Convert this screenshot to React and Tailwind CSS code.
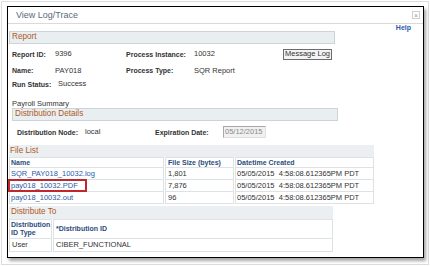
export default function App() {
  const lbl = "text-[7px] font-bold text-[#333] leading-none whitespace-nowrap";
  const val = "text-[7.5px] text-[#333] leading-none whitespace-nowrap";
  const th = "text-[7px] font-bold text-[#2c4d7c] leading-[8px]";
  const cell = "border-x border-b border-[#dde2e4] bg-white flex items-center";
  const link = "text-[7.5px] text-[#2a5aa8] leading-none whitespace-nowrap";
  return (
    <div className="w-[430px] h-[266px] bg-white p-[1px] font-['Liberation_Sans',Arial,sans-serif]">
      <div className="h-full border border-[#dcdcdc] pl-[5px] pt-[4px]">
        <div className="w-[417px] h-[252px] border border-black bg-white shadow-[2px_3px_3px_rgba(0,0,0,0.35)] flex flex-col">
          {/* Title bar */}
          <div className="h-[17px] shrink-0 border-b border-[#dadada] flex items-center pl-[8px] pr-[3px]">
            <span className="text-[9px] leading-none text-[#5b6b7c]">View Log/Trace</span>
            <span className="ml-auto w-[8px] h-[8px] border border-[#cfcfcf] flex items-center justify-center text-[7px] leading-none text-[#999]">×</span>
          </div>
          {/* Help */}
          <div className="h-[7px] shrink-0 flex justify-end pr-[12px]">
            <span className="text-[7px] font-bold leading-[7px] text-[#2a5aa8]">Help</span>
          </div>
          {/* Report bar */}
          <div className="ml-[1px] w-[326px] h-[13px] shrink-0 border border-[#ccd4d8] bg-[#e9eef0] flex items-center pl-[2px]">
            <span className="text-[8.2px] leading-none text-[#b0591f]">Report</span>
          </div>
          {/* Report rows */}
          <div className="pl-[4px] flex flex-col shrink-0">
            <div className="h-[20px] flex items-center">
              <span className={`${lbl} w-[43px]`}>Report ID:</span>
              <span className={`${val} w-[71px]`}>9396</span>
              <span className={`${lbl} w-[68px]`}>Process Instance:</span>
              <span className={`${val} w-[89px]`}>10032</span>
              <span className="h-[11px] px-[1px] border border-[#6b6b6b] bg-[#f3f3f3] flex items-center text-[7.5px] leading-none text-[#333]">Message Log</span>
            </div>
            <div className="h-[13px] flex items-center">
              <span className={`${lbl} w-[43px]`}>Name:</span>
              <span className={`${val} w-[71px]`}>PAY018</span>
              <span className={`${lbl} w-[68px]`}>Process Type:</span>
              <span className={val}>SQR Report</span>
            </div>
            <div className="h-[14px] flex items-center">
              <span className={`${lbl} w-[46px]`}>Run Status:</span>
              <span className={val}>Success</span>
            </div>
          </div>
          {/* Payroll Summary */}
          <div className="mt-[8px] h-[9px] pl-[4px] flex items-center shrink-0">
            <span className={val}>Payroll Summary</span>
          </div>
          <div className="pl-[4px] shrink-0">
            <div className="w-[326px] h-[13px] border border-[#ccd4d8] bg-[#e9eef0] flex items-center pl-[2px]">
              <span className="text-[8.2px] leading-none text-[#b0591f]">Distribution Details</span>
            </div>
            <div className="mt-[5px] h-[12px] flex items-center pl-[5px]">
              <span className={`${lbl} w-[68px]`}>Distribution Node:</span>
              <span className={`${val} w-[70px]`}>local</span>
              <span className={`${lbl} w-[68px]`}>Expiration Date:</span>
              <span className="w-[43px] h-[12px] border border-[#a9a9a9] border-b-[#e0e0e0] border-r-[#e0e0e0] bg-[#f1f1f1] flex items-center pl-[1px] text-[7.5px] leading-none text-[#8a8a8a]">05/12/2015</span>
            </div>
          </div>
          {/* File List */}
          <div className="mt-[7px] ml-[1px] w-[365px] shrink-0">
            <div className="h-[12px] bg-[#ebeff1] flex items-center pl-[1px]">
              <span className="text-[8.2px] leading-none text-[#b0591f]">File List</span>
            </div>
            <div className="grid grid-cols-[155px_69px_139px] gap-x-[1px]">
              <div className={`${cell} h-[11px] border-t pl-[1px]`}><span className={th}>Name</span></div>
              <div className={`${cell} h-[11px] border-t pl-[2px]`}><span className={th}>File Size (bytes)</span></div>
              <div className={`${cell} h-[11px] border-t pl-[1px]`}><span className={th}>Datetime Created</span></div>

              <div className={`${cell} h-[12px] pl-[1px]`}><span className={link}>SQR_PAY018_10032.log</span></div>
              <div className={`${cell} h-[12px] pl-[2px]`}><span className={val}>1,801</span></div>
              <div className={`${cell} h-[12px] pl-[1px]`}><span className={`${val} whitespace-pre`}>05/05/2015  4:58:08.612365PM PDT</span></div>

              <div className={`${cell} h-[12px] pl-[1px] relative`}>
                <span className={link}>pay018_10032.PDF</span>
                <span className="absolute left-[-2px] top-[-1px] w-[79px] h-[13px] border-2 border-[#c0272d]"></span>
              </div>
              <div className={`${cell} h-[12px] pl-[2px]`}><span className={val}>7,876</span></div>
              <div className={`${cell} h-[12px] pl-[1px]`}><span className={`${val} whitespace-pre`}>05/05/2015  4:58:08.612365PM PDT</span></div>

              <div className={`${cell} h-[12px] pl-[1px]`}><span className={link}>pay018_10032.out</span></div>
              <div className={`${cell} h-[12px] pl-[2px]`}><span className={val}>96</span></div>
              <div className={`${cell} h-[12px] pl-[1px]`}><span className={`${val} whitespace-pre`}>05/05/2015  4:58:08.612365PM PDT</span></div>
            </div>
          </div>
          {/* Distribute To */}
          <div className="mt-[2px] ml-[1px] w-[324px] shrink-0">
            <div className="h-[13px] bg-[#ebeff1] flex items-center pl-[2px]">
              <span className="text-[8.2px] leading-none text-[#b0591f]">Distribute To</span>
            </div>
            <div className="grid grid-cols-[43px_280px] gap-x-[1px]">
              <div className={`${cell} h-[20px] border-t pl-[1px]`}><span className={th}>Distribution<br />ID Type</span></div>
              <div className={`${cell} h-[20px] border-t pl-[2px]`}><span className={th}>*Distribution ID</span></div>
              <div className={`${cell} h-[13px] pl-[2px]`}><span className={val}>User</span></div>
              <div className={`${cell} h-[13px] pl-[2px]`}><span className={val}>CIBER_FUNCTIONAL</span></div>
            </div>
          </div>
        </div>
      </div>
    </div>
  );
}
